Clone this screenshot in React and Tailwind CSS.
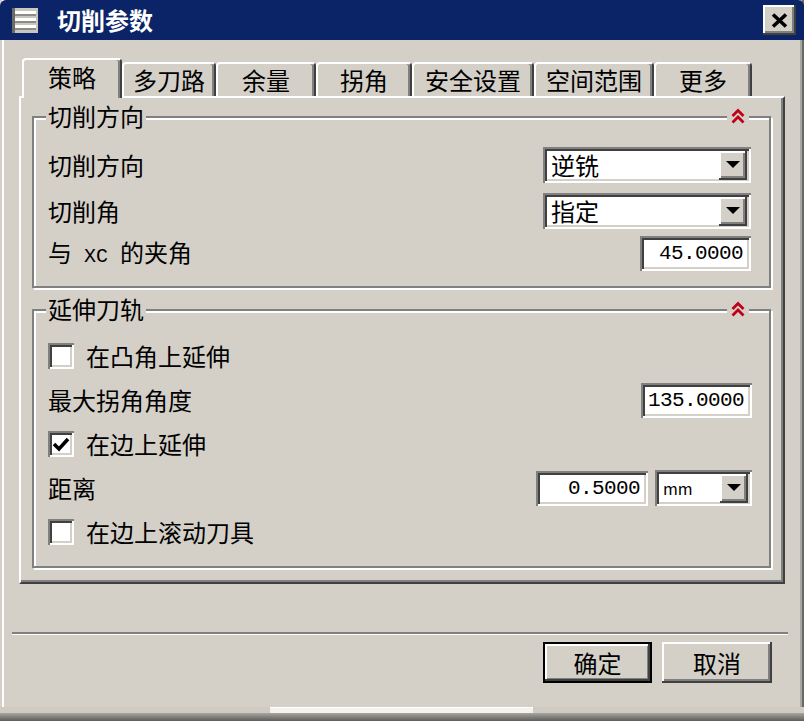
import React from "react";

const CJK = "font-['Noto_Sans_CJK_SC','Noto_Sans',sans-serif]";
const MONO = "font-['Liberation_Mono','DejaVu_Sans_Mono',monospace]";
const SUNKEN =
  "shadow-[inset_2px_2px_0_#808080,inset_-2px_-2px_0_#ffffff,inset_4px_4px_0_#404040,inset_-4px_-4px_0_#d4d0c8]";
const RAISED =
  "shadow-[inset_-2px_-2px_0_#404040,inset_2px_2px_0_#ffffff,inset_-4px_-4px_0_#808080]";

function Arrow() {
  return (
    <svg width="14" height="8" viewBox="0 0 14 8">
      <polygon points="0,0 14,0 7,7" fill="#000" />
    </svg>
  );
}

function Select({ value, w, small }) {
  return (
    <div className={`${w} h-[36px] bg-white ${SUNKEN} flex items-center pl-[8px] pr-[4px]`}>
      <span className={`flex-1 leading-none ${small ? "text-[16px]" : "text-[24px]"}`}>{value}</span>
      <div className={`w-[28px] h-[29px] bg-[#d4d0c8] ${RAISED} flex items-center justify-center`}>
        <Arrow />
      </div>
    </div>
  );
}

function NumInput({ value, w }) {
  return (
    <div className={`${w} h-[35px] bg-white ${SUNKEN} flex items-center justify-end pr-[8px]`}>
      <span className={`${MONO} text-[21px] tracking-[-0.6px] leading-none text-black`}>{value}</span>
    </div>
  );
}

function Checkbox({ checked }) {
  return (
    <div className={`w-[26px] h-[26px] bg-white ${SUNKEN} flex items-center justify-center`}>
      {checked && (
        <svg width="18" height="16" viewBox="0 0 18 16">
          <polyline points="2,8 7,13 16,3" fill="none" stroke="#000" strokeWidth="3.6" />
        </svg>
      )}
    </div>
  );
}

function Chevron() {
  return (
    <svg width="16" height="17" viewBox="0 0 16 17">
      <polyline points="2.5,8 8,2.5 13.5,8" fill="none" stroke="#c0001a" strokeWidth="2.8" />
      <polyline points="2.5,14.5 8,9 13.5,14.5" fill="none" stroke="#c0001a" strokeWidth="2.8" />
    </svg>
  );
}

function Group({ title, children, className }) {
  return (
    <div
      className={`relative border-2 border-[#808080] shadow-[2px_2px_0_#ffffff,inset_2px_2px_0_#ffffff] ${className}`}
    >
      <span className="absolute left-[12px] top-[-15px] bg-[#d4d0c8] px-[2px] h-[26px] leading-[26px] text-[24px]">
        {title}
      </span>
      <span className="absolute right-[20px] top-[-10px] bg-[#d4d0c8] px-[3px] flex">
        <Chevron />
      </span>
      {children}
    </div>
  );
}

function Tab({ label, w, active }) {
  return (
    <div
      className={`${w} ${
        active ? "h-[40px] -mb-[2px] z-10 pb-[4px]" : "h-[34px]"
      } relative bg-[#d4d0c8] border-t-2 border-l-2 border-r-2 border-t-white border-l-white border-r-[#404040] shadow-[inset_-2px_0_0_#808080] rounded-t-[4px] flex items-center justify-center text-[24px] leading-none`}
    >
      {label}
    </div>
  );
}

export default function App() {
  return (
    <div
      className={`${CJK} text-black w-[804px] h-[721px] bg-[#d4d0c8] flex flex-col overflow-hidden shadow-[inset_2px_0_0_#d4d0c8,inset_4px_0_0_#ffffff,inset_-2px_0_0_#6a6864,inset_-4px_0_0_#a8a6a2]`}
    >
      {/* Title bar */}
      <div className="h-[40px] shrink-0 bg-[#0b2467] rounded-t-[6px] flex items-center pl-[12px] pr-[8px]">
        <svg width="26" height="25" viewBox="0 0 26 25">
          <rect x="0" y="0" width="26" height="25" fill="#c9c6c0" />
          <rect x="0" y="0" width="3" height="25" fill="#6d6b68" />
          <rect x="3" y="3" width="21" height="3" fill="#ffffff" />
          <rect x="3" y="6" width="21" height="2" fill="#8e8b86" />
          <rect x="3" y="10" width="21" height="3" fill="#ffffff" />
          <rect x="3" y="13" width="21" height="2" fill="#8e8b86" />
          <rect x="3" y="17" width="21" height="3" fill="#ffffff" />
          <rect x="3" y="20" width="21" height="2" fill="#8e8b86" />
        </svg>
        <span className="ml-[19px] text-white font-bold text-[24px] leading-none flex-1">切削参数</span>
        <div className={`w-[33px] h-[30px] bg-[#d4d0c8] ${RAISED} flex items-center justify-center`}>
          <svg width="17" height="15" viewBox="0 0 17 15">
            <line x1="2" y1="1.5" x2="15" y2="13.5" stroke="#000" strokeWidth="3.6" />
            <line x1="15" y1="1.5" x2="2" y2="13.5" stroke="#000" strokeWidth="3.6" />
          </svg>
        </div>
      </div>

      {/* Tabs */}
      <div className="mt-[18px] h-[38px] flex items-end pl-[22px]">
        <Tab label="策略" w="w-[100px]" active />
        <Tab label="多刀路" w="w-[94px]" />
        <Tab label="余量" w="w-[100px]" />
        <Tab label="拐角" w="w-[96px]" />
        <Tab label="安全设置" w="w-[122px]" />
        <Tab label="空间范围" w="w-[120px]" />
        <Tab label="更多" w="w-[98px]" />
      </div>

      {/* Panel */}
      <div className="ml-[19px] mr-[19px] h-[488px] border-2 border-t-white border-l-white border-r-[#404040] border-b-[#404040] shadow-[inset_-2px_-2px_0_#808080] pt-[18px] pl-[11px] pr-[12px] flex flex-col">
        <Group title="切削方向" className="pt-[24px] pl-[14px] pr-[18px] pb-[14px]">
          <div className="h-[46px] flex items-center justify-between">
            <span className="text-[24px] leading-none">切削方向</span>
            <Select value="逆铣" w="w-[208px]" />
          </div>
          <div className="h-[46px] flex items-center justify-between">
            <span className="text-[24px] leading-none">切削角</span>
            <Select value="指定" w="w-[208px]" />
          </div>
          <div className="h-[38px] flex items-center justify-between">
            <span className="text-[24px] leading-none">
              与<span className="inline-block w-[12px]" />
              <span className={`${MONO} text-[20px]`}>XC</span>
              <span className="inline-block w-[12px]" />的夹角
            </span>
            <NumInput value="45.0000" w="w-[111px]" />
          </div>
        </Group>

        <Group title="延伸刀轨" className="mt-[21px] pt-[23px] pl-[14px] pr-[17px] pb-[12px]">
          <div className="h-[44px] flex items-center gap-[12px]">
            <Checkbox />
            <span className="text-[24px] leading-none">在凸角上延伸</span>
          </div>
          <div className="h-[44px] flex items-center justify-between">
            <span className="text-[24px] leading-none">最大拐角角度</span>
            <NumInput value="135.0000" w="w-[111px]" />
          </div>
          <div className="h-[44px] flex items-center gap-[12px]">
            <Checkbox checked />
            <span className="text-[24px] leading-none">在边上延伸</span>
          </div>
          <div className="h-[44px] flex items-center">
            <span className="text-[24px] leading-none flex-1">距离</span>
            <NumInput value="0.5000" w="w-[112px]" />
            <div className="w-[7px]" />
            <Select value="mm" w="w-[97px]" small />
          </div>
          <div className="h-[44px] flex items-center gap-[12px]">
            <Checkbox />
            <span className="text-[24px] leading-none">在边上滚动刀具</span>
          </div>
        </Group>
      </div>

      {/* Separator */}
      <div className="mt-[48px] ml-[12px] mr-[16px] h-[3px] border-t-2 border-[#808080] border-b border-b-white" />

      {/* Buttons */}
      <div className="mt-[7px] flex justify-end gap-[10px] pr-[32px]">
        <div className="w-[109px] h-[41px] border-2 border-black bg-[#d4d0c8] shadow-[inset_-2px_-2px_0_#404040,inset_2px_2px_0_#ffffff,inset_-3px_-3px_0_#808080] flex items-center justify-center text-[24px] leading-none">
          确定
        </div>
        <div className={`w-[110px] h-[41px] bg-[#d4d0c8] ${RAISED} flex items-center justify-center text-[24px] leading-none`}>
          取消
        </div>
      </div>

      {/* Bottom edge */}
      <div className="mt-auto h-[14px] flex flex-col">
        <div className="h-[6px] flex">
          <div className="w-[270px] bg-[#cfcbc3]" />
          <div className="w-[263px] bg-[#f4f2ee] border-t border-white" />
          <div className="flex-1 bg-[#cfcbc3]" />
        </div>
        <div className="flex-1 bg-gradient-to-b from-[#a9a6a0] to-[#5f5d5a]" />
      </div>
    </div>
  );
}
